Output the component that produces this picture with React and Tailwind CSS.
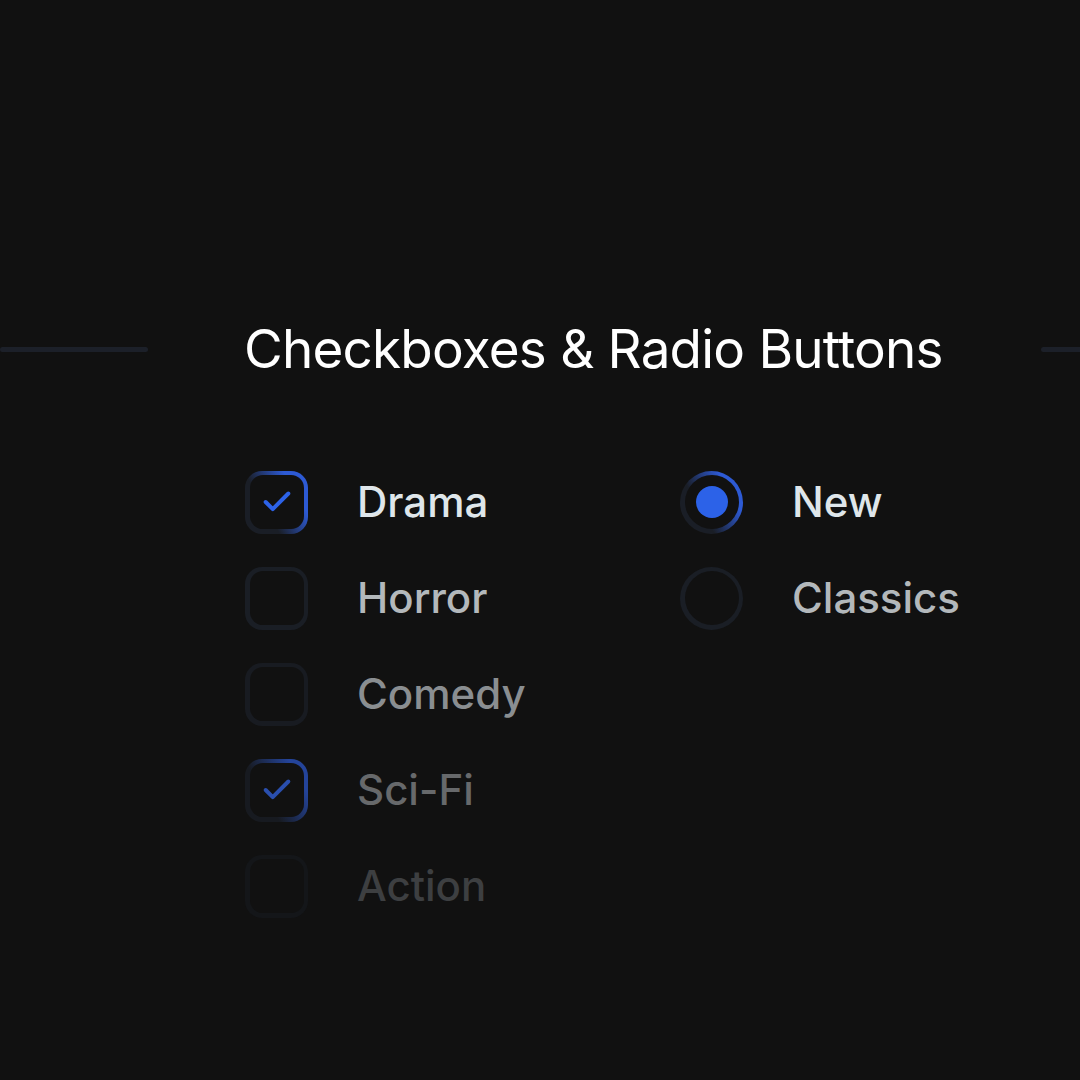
import { Check } from "lucide-react";

const checkboxes = [
  { label: "Drama", checked: true, text: "text-[#dfe6ea]", box: "bg-[linear-gradient(60deg,#1a1e26_35%,#2d5ad4_75%)]", tick: "text-[#2d63e8]" },
  { label: "Horror", checked: false, text: "text-[#b3b8bb]", box: "bg-[#1a1e25]" },
  { label: "Comedy", checked: false, text: "text-[#8a8e91]", box: "bg-[#181b21]" },
  { label: "Sci-Fi", checked: true, text: "text-[#67696b]", box: "bg-[linear-gradient(60deg,#171a20_35%,#24449a_80%)]", tick: "text-[#2a4fae]" },
  { label: "Action", checked: false, text: "text-[#3d3f41]", box: "bg-[#141619]" },
];

const radios = [
  { label: "New", selected: true, text: "text-[#dfe6ea]", ring: "bg-[linear-gradient(60deg,#1a1e26_35%,#2d5ad4_75%)]" },
  { label: "Classics", selected: false, text: "text-[#b3b8bb]", ring: "bg-[#1a1e25]" },
];

function Checkbox({ item }) {
  return (
    <div className="flex h-[62px] items-center">
      <div className={`h-[63px] w-[63px] rounded-[17px] p-[4.5px] ${item.box}`}>
        <div className="flex h-full w-full items-center justify-center rounded-[13px] bg-[#111111]">
          {item.checked ? (
            <Check className={`h-[34px] w-[34px] ${item.tick}`} strokeWidth={2.8} />
          ) : null}
        </div>
      </div>
      <span className={`ml-[49px] text-[42px] font-medium leading-none ${item.text}`}>
        {item.label}
      </span>
    </div>
  );
}

function Radio({ item }) {
  return (
    <div className="flex h-[62px] items-center">
      <div className={`h-[63px] w-[63px] rounded-full p-[4.5px] ${item.ring}`}>
        <div className="flex h-full w-full items-center justify-center rounded-full bg-[#111111]">
          {item.selected ? (
            <div className="h-[32px] w-[32px] rounded-full bg-[#2c62e8]" />
          ) : null}
        </div>
      </div>
      <span className={`ml-[49px] text-[42px] font-medium leading-none ${item.text}`}>
        {item.label}
      </span>
    </div>
  );
}

export default function App() {
  return (
    <div className="h-[1080px] w-[1080px] overflow-hidden bg-[#111111] font-['Inter',sans-serif]">
      <div className="flex items-center pt-[319px]">
        <div className="h-[5px] w-[148px] rounded-full bg-[#1c2029]" />
        <h1 className="ml-[96px] text-[53px] font-normal leading-[60px] tracking-[-0.015em] text-white">
          Checkboxes &amp; Radio Buttons
        </h1>
        <div className="ml-auto h-[5px] w-[39px] rounded-l-full bg-[#1c2029]" />
      </div>

      <div className="mt-[92px] flex pl-[245px]">
        <div className="flex w-[435px] flex-col gap-[34px]">
          {checkboxes.map((item) => (
            <Checkbox key={item.label} item={item} />
          ))}
        </div>
        <div className="flex flex-col gap-[34px]">
          {radios.map((item) => (
            <Radio key={item.label} item={item} />
          ))}
        </div>
      </div>
    </div>
  );
}
